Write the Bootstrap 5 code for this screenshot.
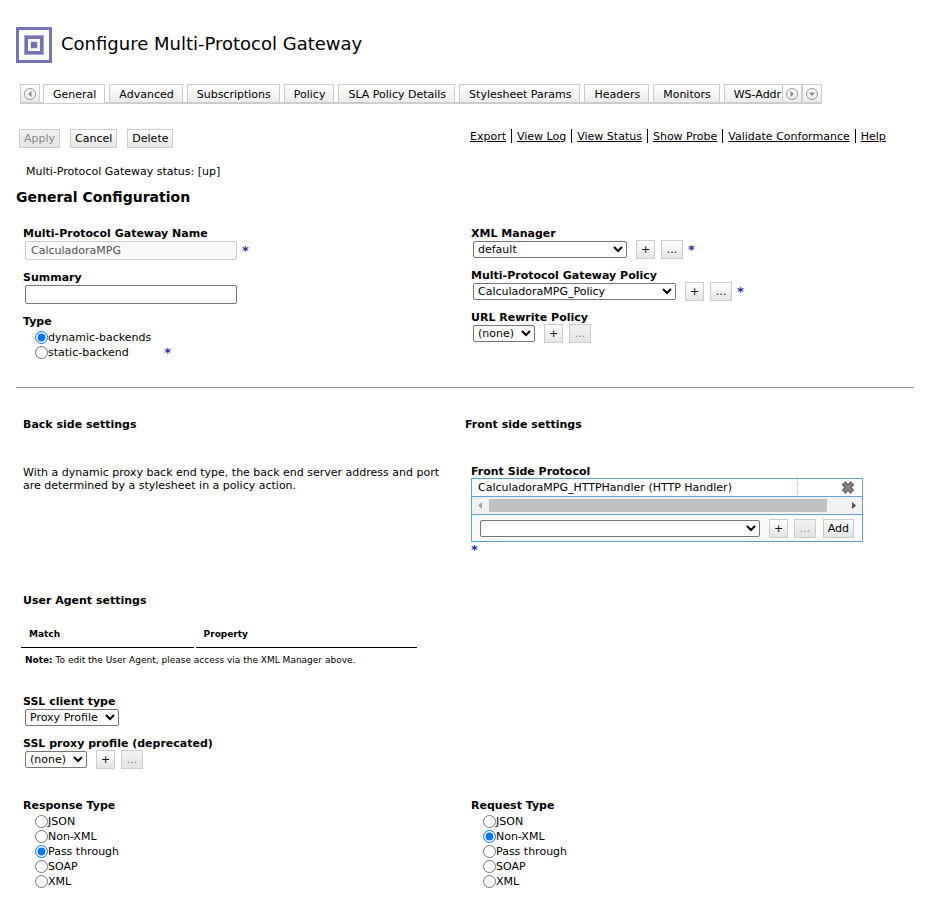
<!DOCTYPE html>
<html lang="en">
<head>
<meta charset="utf-8">
<meta name="viewport" content="width=device-width, initial-scale=1">
<title>Configure Multi-Protocol Gateway</title>
<link href="https://cdn.jsdelivr.net/npm/bootstrap@5.3.0/dist/css/bootstrap.min.css" rel="stylesheet">
<style>
body { font-family: "DejaVu Sans", Verdana, sans-serif; font-size: 11px; line-height: 13px; color: #000; background: #fff; }
main { padding: 27px 21px 26px 16px; }
h1 { font-size: 18px; line-height: 22px; font-weight: 400; padding-bottom: 2px; }
h2 { font-size: 14px; line-height: 18px; font-weight: 700; margin: 9px 0 20px; }
h3 { font-size: 11px; line-height: 14px; font-weight: 700; margin: 0; }
a { color: #000; }
a:hover { color: #333; }
.page-head { gap: 9px; margin-bottom: 21px; }
.tab-strip { height: 20px; max-width: 802px; margin: 0 0 25px 4px; background: linear-gradient(#ccc, #ccc) bottom / 100% 2px no-repeat; }
.tab-list { gap: 4px; margin-left: 3px; min-width: 0; overflow: hidden; }
.tab-link { display: block; height: 18px; padding: 3px 8px 0 9px; border: 1px solid #ccc; border-bottom: 0; background: linear-gradient(#fff, #ebebeb); text-decoration: none; white-space: nowrap; }
.tab-link.active { height: 19px; background: #fff; }
.tab-list li:last-child .tab-link { padding-right: 0; border-right: 0; }
.tab-move { width: 20px; height: 19px; padding: 0; border: 1px solid #ccc; background: linear-gradient(#fff, #ebebeb); flex: none; }
.tab-move svg, .remove svg { display: block; margin: auto; }
.act { height: 19px; padding: 0 4px; border: 1px solid #ccc; background: linear-gradient(#fff, #e4e4e4); color: #000; font-size: 11px; line-height: 18px; white-space: nowrap; flex: none; }
.act:disabled { color: #888; background: linear-gradient(#f1f1f1, #e4e4e4); }
.toolbar { padding-left: 3px; gap: 10px; }
.link-bar { padding-left: 5px; gap: 5px; }
.link-bar li { white-space: nowrap; }
.link-bar a { display: inline-block; padding-top: 1px; }
.link-bar li + li { border-left: 1px solid #000; padding-left: 5px; }
.status { margin: 17px 0 0 10px; line-height: 14px; }
.pane { padding-left: 7px; }
.pane-end { padding-left: 6px; }
.field { margin-bottom: 9px; }
.field-title { display: block; float: none; width: auto; margin: 0; padding-top: 1px; font-size: 11px; line-height: 13px; font-weight: 700; }
.field-title.tight { line-height: 12px; }
.ctl { height: 19px; padding-left: 2px; }
.act-more { width: 22px; margin-left: 6px; padding: 0; }
.act-plus { width: 19px; margin-left: 9px; padding: 0; }
.field-text { margin-bottom: 10px; }
.field-text .field-title { margin-bottom: 1px; }
.pick { height: 17px; border: 1px solid #767676; border-radius: 2px; background: #fff; color: #000; font-size: 11px; line-height: 13px; padding: 0; min-width: 0; }
.pick-xs { width: 62px; } .pick-sm { width: 94px; } .pick-md { width: 154px; } .pick-lg { width: 203px; } .pick-xl { width: 280px; }
.entry { width: 212px; height: 19px; border: 1px solid #767676; border-radius: 2px; padding: 0 5px; font-size: 11px; }
.entry:disabled { border-color: #ccc; background: #f8f8f8; color: #545454; }
.req { color: #1f2f9c; font-size: 13px; font-weight: 700; line-height: 15px; margin-left: 5px; }
.choices { padding: 2px 0 0 12px; }
.choice { height: 15px; }
.choice input { width: 13px; height: 13px; margin: 0; }
.rule { border-top: 1px solid #999; border-bottom: 1px solid #eee; margin: 27px 0 29px; height: 2px; opacity: 1; background: none; }
.settings { margin-top: 33px; }
.settings-text { max-width: 430px; padding-top: 1px; }
.picker-box { width: 392px; max-width: 100%; border: 1px solid #699fcd; }
.picked { height: 18px; border-bottom: 1px solid #699fcd; padding-left: 6px; }
.remove { width: 65px; height: 17px; padding: 0 0 0 36px; border: 0; border-left: 1px dotted #a9c7df; background: none; }
.scroller { height: 18px; border-bottom: 1px solid #699fcd; background: #f1f1f1; }
.scroller svg { flex: none; }
.scroller-track { height: 13px; }
.scroller-thumb { width: 95%; height: 13px; background: #c1c1c1; }
.picker { height: 26px; padding-left: 8px; background: #fafafa; }
.agent-part { margin-top: 37px; }
.agents { width: 400px; max-width: 100%; margin: 16px 0 0 -4px; border-collapse: separate; border-spacing: 2px; }
.agents th { font-size: 9px; line-height: 13px; font-weight: 700; padding: 2px 8px 6px; border-bottom: 1px solid #000; }
.note { font-size: 9px; line-height: 13px; margin: 4px 0 27px 2px; }
.types { margin-top: 29px; }
</style>
</head>
<body>
<main>
  <header class="page-head d-flex align-items-center">
    <svg width="36" height="36" viewBox="0 0 36 36" aria-hidden="true" shape-rendering="crispEdges">
      <rect x="1.5" y="1.5" width="33" height="33" fill="#fff" stroke="#7473b6" stroke-width="3"/>
      <rect x="8" y="8" width="20" height="20" fill="#a5a4d0"/>
      <rect x="9" y="9" width="18" height="18" fill="#7473b6"/>
      <rect x="12" y="12" width="12" height="12" fill="#fff"/>
      <rect x="14" y="14" width="8" height="8" fill="#e2e2f0"/>
      <rect x="15" y="15" width="6" height="6" fill="#7473b6"/>
    </svg>
    <h1 class="m-0">Configure Multi-Protocol Gateway</h1>
  </header>

  <nav class="tab-strip d-flex" aria-label="Configuration tabs">
    <button type="button" class="tab-move" aria-label="Scroll left"><svg width="14" height="14" viewBox="0 0 14 14"><circle cx="7" cy="7" r="5.5" fill="none" stroke="#999"/><path d="M8.500 4v6L5 7z" fill="#888"/></svg></button>
    <ul class="tab-list list-unstyled d-flex flex-nowrap flex-grow-1 mb-0">
      <li><a class="tab-link active" href="#" aria-current="page">General</a></li>
      <li><a class="tab-link" href="#">Advanced</a></li>
      <li><a class="tab-link" href="#">Subscriptions</a></li>
      <li><a class="tab-link" href="#">Policy</a></li>
      <li><a class="tab-link" href="#">SLA Policy Details</a></li>
      <li><a class="tab-link" href="#">Stylesheet Params</a></li>
      <li><a class="tab-link" href="#">Headers</a></li>
      <li><a class="tab-link" href="#">Monitors</a></li>
      <li><a class="tab-link" href="#">WS-Addr</a></li>
    </ul>
    <button type="button" class="tab-move" aria-label="Scroll right"><svg width="14" height="14" viewBox="0 0 14 14"><circle cx="7" cy="7" r="5.500" fill="none" stroke="#999"/><path d="M5.500 4v6L9 7z" fill="#888"/></svg></button>
    <button type="button" class="tab-move" aria-label="List all tabs"><svg width="14" height="14" viewBox="0 0 14 14"><circle cx="7" cy="7" r="5.500" fill="none" stroke="#999"/><path d="M4 5.500h6L7 9z" fill="#888"/></svg></button>
  </nav>

  <div class="row g-0">
    <div class="col-6 toolbar d-flex align-items-start">
      <button type="button" class="act" disabled>Apply</button>
      <button type="button" class="act">Cancel</button>
      <button type="button" class="act">Delete</button>
    </div>
    <ul class="col-6 link-bar list-unstyled d-flex mb-0 align-items-start">
      <li><a href="#">Export</a></li>
      <li><a href="#">View Log</a></li>
      <li><a href="#">View Status</a></li>
      <li><a href="#">Show Probe</a></li>
      <li><a href="#">Validate Conformance</a></li>
      <li><a href="#">Help</a></li>
    </ul>
  </div>
  <p class="status mb-0">Multi-Protocol Gateway status: [up]</p>
  <h2>General Configuration</h2>

  <form>
    <div class="row g-0">
      <div class="col-6 pane">
        <div class="field-text">
          <label class="field-title" for="gw-name">Multi-Protocol Gateway Name</label>
          <div class="ctl d-flex align-items-center"><input class="entry" id="gw-name" type="text" value="CalculadoraMPG" disabled><span class="req">*</span></div>
        </div>
        <div class="field-text">
          <label class="field-title" for="summary">Summary</label>
          <div class="ctl d-flex align-items-center"><input class="entry" id="summary" type="text"></div>
        </div>
        <fieldset>
          <legend class="field-title">Type</legend>
          <div class="d-flex align-items-end">
            <div class="choices">
              <div class="choice d-flex align-items-center"><input type="radio" name="type" id="t1" checked><label for="t1">dynamic-backends</label></div>
              <div class="choice d-flex align-items-center"><input type="radio" name="type" id="t2"><label for="t2">static-backend</label></div>
            </div>
            <span class="req ps-2">*</span>
          </div>
        </fieldset>
      </div>
      <div class="col-6 pane-end">
        <div class="field">
          <label class="field-title" for="xml-manager">XML Manager</label>
          <div class="ctl d-flex align-items-center"><select class="pick pick-md" id="xml-manager"><option>default</option></select><button type="button" class="act act-plus">+</button><button type="button" class="act act-more">...</button><span class="req">*</span></div>
        </div>
        <div class="field">
          <label class="field-title" for="gw-policy">Multi-Protocol Gateway Policy</label>
          <div class="ctl d-flex align-items-center"><select class="pick pick-lg" id="gw-policy"><option>CalculadoraMPG_Policy</option></select><button type="button" class="act act-plus">+</button><button type="button" class="act act-more">...</button><span class="req">*</span></div>
        </div>
        <div class="field">
          <label class="field-title" for="url-policy">URL Rewrite Policy</label>
          <div class="ctl d-flex align-items-center"><select class="pick pick-xs" id="url-policy"><option>(none)</option></select><button type="button" class="act act-plus">+</button><button type="button" class="act act-more" disabled>...</button></div>
        </div>
      </div>
    </div>

    <hr class="rule">

    <div class="row g-0">
      <section class="col-6 pane">
        <h3>Back side settings</h3>
        <p class="settings settings-text mb-0">With a dynamic proxy back end type, the back end server address and port are determined by a stylesheet in a policy action.</p>
      </section>
      <section class="col-6">
        <h3>Front side settings</h3>
        <div class="settings pane-end">
          <label class="field-title tight" for="front-side">Front Side Protocol</label>
          <div class="picker-box">
            <div class="picked d-flex align-items-center justify-content-between">
              <span>CalculadoraMPG_HTTPHandler (HTTP Handler)</span>
              <button type="button" class="remove" aria-label="Remove"><svg width="28" height="15" viewBox="0 0 28 15"><path d="M9.500 3l9 9m0-9l-9 9" stroke="#4c4c4c" stroke-width="5" fill="none"/><path d="M9.500 3l9 9m0-9l-9 9" stroke="#858585" stroke-width="3" fill="none"/></svg></button>
            </div>
            <div class="scroller d-flex align-items-center">
              <svg width="17" height="17" viewBox="0 0 17 17"><path d="M10 5v7L6 8.500z" fill="#a3a3a3"/></svg>
              <div class="scroller-track flex-grow-1"><div class="scroller-thumb"></div></div>
              <svg width="17" height="17" viewBox="0 0 17 17"><path d="M7 5v7l4-3.500z" fill="#505050"/></svg>
            </div>
            <div class="picker d-flex align-items-center"><select class="pick pick-xl" id="front-side"><option></option></select><button type="button" class="act act-plus">+</button><button type="button" class="act act-more" disabled>...</button><button type="button" class="act ms-auto me-2">Add</button></div>
          </div>
          <div class="req ms-0">*</div>
        </div>
      </section>
    </div>

    <section class="pane agent-part">
      <h3>User Agent settings</h3>
      <table class="agents">
        <thead><tr><th scope="col">Match</th><th scope="col">Property</th></tr></thead>
      </table>
      <p class="note"><strong>Note:</strong> To edit the User Agent, please access via the XML Manager above.</p>
      <div class="field">
        <label class="field-title" for="ssl-type">SSL client type</label>
        <div class="ctl d-flex align-items-center"><select class="pick pick-sm" id="ssl-type"><option>Proxy Profile</option></select></div>
      </div>
      <div>
        <label class="field-title" for="ssl-proxy">SSL proxy profile (deprecated)</label>
        <div class="ctl d-flex align-items-center"><select class="pick pick-xs" id="ssl-proxy"><option>(none)</option></select><button type="button" class="act act-plus">+</button><button type="button" class="act act-more" disabled>...</button></div>
      </div>
    </section>

    <div class="row g-0 types">
      <fieldset class="col-6 pane">
        <legend class="field-title">Response Type</legend>
        <div class="choices">
          <div class="choice d-flex align-items-center"><input type="radio" name="res" id="r1"><label for="r1">JSON</label></div>
          <div class="choice d-flex align-items-center"><input type="radio" name="res" id="r2"><label for="r2">Non-XML</label></div>
          <div class="choice d-flex align-items-center"><input type="radio" name="res" id="r3" checked><label for="r3">Pass through</label></div>
          <div class="choice d-flex align-items-center"><input type="radio" name="res" id="r4"><label for="r4">SOAP</label></div>
          <div class="choice d-flex align-items-center"><input type="radio" name="res" id="r5"><label for="r5">XML</label></div>
        </div>
      </fieldset>
      <fieldset class="col-6 pane-end">
        <legend class="field-title">Request Type</legend>
        <div class="choices">
          <div class="choice d-flex align-items-center"><input type="radio" name="req" id="q1"><label for="q1">JSON</label></div>
          <div class="choice d-flex align-items-center"><input type="radio" name="req" id="q2" checked><label for="q2">Non-XML</label></div>
          <div class="choice d-flex align-items-center"><input type="radio" name="req" id="q3"><label for="q3">Pass through</label></div>
          <div class="choice d-flex align-items-center"><input type="radio" name="req" id="q4"><label for="q4">SOAP</label></div>
          <div class="choice d-flex align-items-center"><input type="radio" name="req" id="q5"><label for="q5">XML</label></div>
        </div>
      </fieldset>
    </div>
  </form>
</main>
<script src="https://cdn.jsdelivr.net/npm/bootstrap@5.3.0/dist/js/bootstrap.bundle.min.js"></script>
</body>
</html>
